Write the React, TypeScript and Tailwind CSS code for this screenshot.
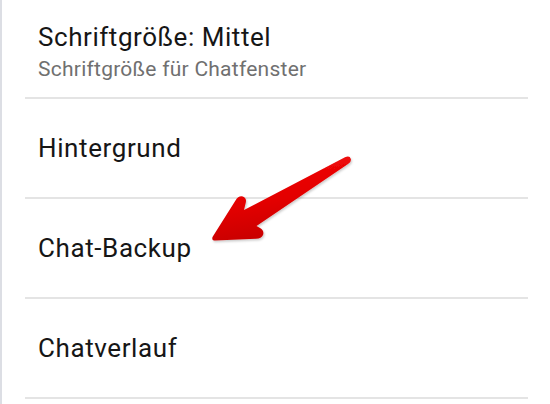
const items = [
  { title: "Hintergrund" },
  { title: "Chat-Backup" },
  { title: "Chatverlauf" },
];

const Divider = () => <div className="ml-[25px] mr-[22px] h-[2px] bg-[#e4e4e4]" />;

const Arrow = () => (
  <svg
    className="absolute left-0 top-0 pointer-events-none"
    width="550"
    height="404"
    viewBox="0 0 550 404"
  >
    <defs>
      <linearGradient id="arrowFill" x1="0" y1="0" x2="0.3" y2="1">
        <stop offset="0" stopColor="#f51010" />
        <stop offset="0.6" stopColor="#e30000" />
        <stop offset="1" stopColor="#c80000" />
      </linearGradient>
      <filter id="arrowShadow" x="-10%" y="-10%" width="130%" height="130%">
        <feDropShadow dx="1" dy="1.5" stdDeviation="1.2" floodColor="#000" floodOpacity="0.22" />
      </filter>
    </defs>
    <path
      d="M345.5 157 Q350 155.5 350.8 159 Q351.3 162.5 348 164 L256.5 226 L260 228 Q264.5 230.5 263 235 Q261.5 238.5 256 238.8 L215 240.5 Q211.5 240.5 212.5 237 L235.5 200.5 Q238.5 195.5 242.8 196.5 Q246.8 198 245.8 202.5 L244 210 Z"
      fill="url(#arrowFill)"
      filter="url(#arrowShadow)"
    />
  </svg>
);

export default function App() {
  return (
    <div className="relative w-[550px] h-[404px] overflow-hidden bg-white font-['Roboto',sans-serif]">
      <div className="absolute left-0 top-0 h-full w-[2px] bg-[#dcdee4]" />
      <div className="h-[97px] flex flex-col pt-[22px] pl-[38px]">
        <div className="text-[26px] leading-[30px] tracking-[0.55px] text-[#161616]">
          Schriftgröße: Mittel
        </div>
        <div className="mt-[5px] text-[21px] leading-[24px] tracking-[0.25px] text-[#707070]">
          Schriftgröße für Chatfenster
        </div>
      </div>
      <Divider />
      {items.map((item) => (
        <div key={item.title}>
          <div className="h-[98px] flex items-center pl-[38px] text-[26px] tracking-[0.6px] text-[#161616]">
            {item.title}
          </div>
          <Divider />
        </div>
      ))}
      <Arrow />
    </div>
  );
}
